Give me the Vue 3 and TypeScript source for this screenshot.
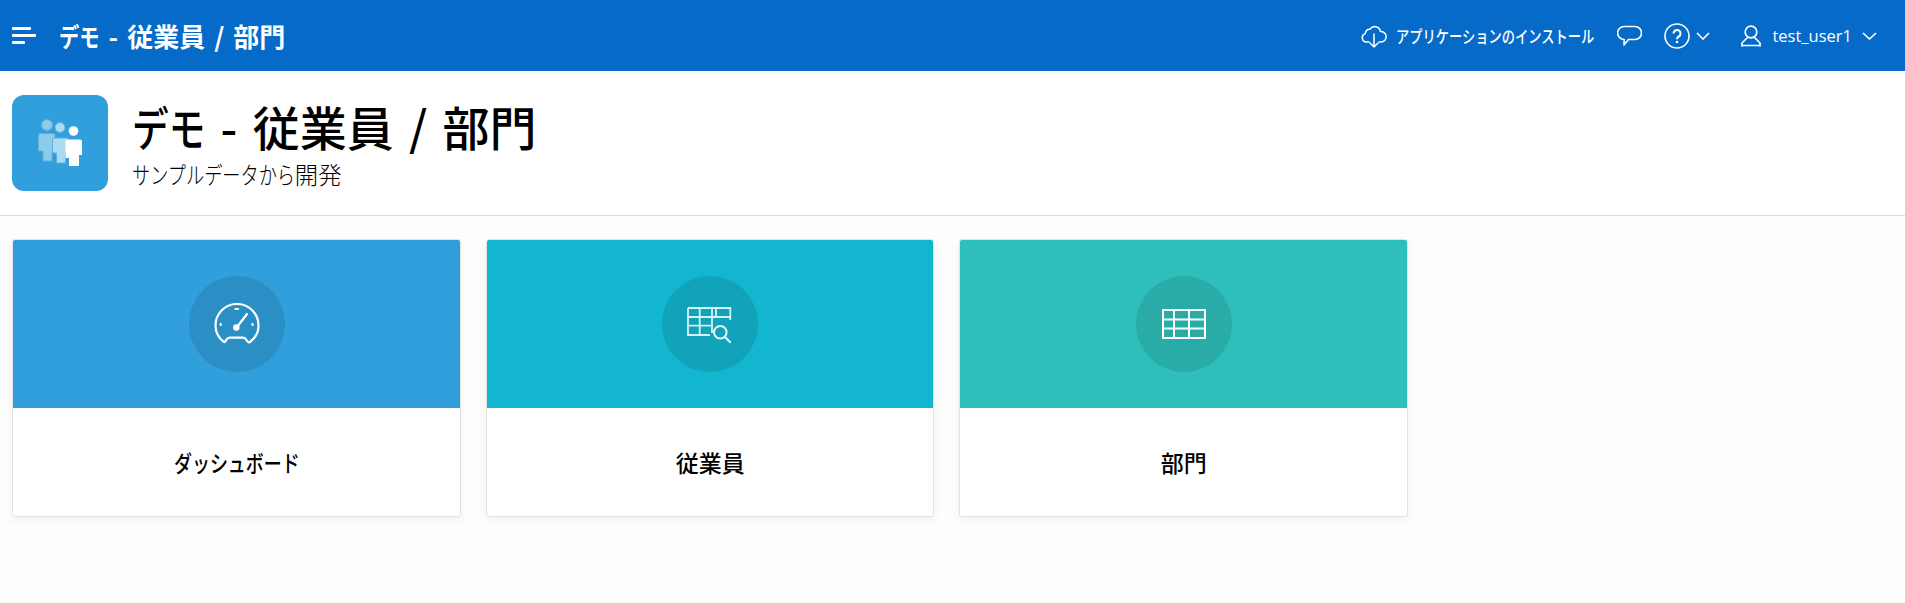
<script setup lang="ts">
interface Card { label: string; kana: boolean; color: string; icon: 'gauge' | 'search' | 'table' }
const cards: Card[] = [
  { label: 'ダッシュボード', kana: true, color: '#309fdb', icon: 'gauge' },
  { label: '従業員', kana: false, color: '#13b6cf', icon: 'search' },
  { label: '部門', kana: false, color: '#2ebfbc', icon: 'table' },
]
</script>

<template>
  <div class="page">
    <header class="topbar">
      <svg class="menu" width="25" height="17" viewBox="0 0 25 17" fill="#fff">
        <rect x="0" y="0" width="19" height="3" rx="1" />
        <rect x="0" y="7" width="24" height="3" rx="1" />
        <rect x="0" y="14" width="13" height="3" rx="1" />
      </svg>
      <div class="app-name"><span class="kana k2">デモ</span> - 従業員 / 部門</div>
      <nav class="actions">
        <svg class="ic-cloud" width="26" height="24" viewBox="0 0 26 24" fill="none" stroke="#fff" stroke-width="1.500" stroke-linecap="round" stroke-linejoin="round">
          <path d="M8 18H5.500a4.300 4.300 0 0 1-1.200-8.400 4.200 4.200 0 0 1 4.700-4.300A5.600 5.600 0 0 1 19.300 7.500a5 5 0 0 1 1.200 10.500H18" />
          <path d="M13 10v13M9 19l4 4 4-4" />
        </svg>
        <span class="install"><span class="kana k15">アプリケーションのインストール</span></span>
        <svg class="ic-chat" width="25" height="22" viewBox="0 0 25 22" fill="none" stroke="#fff" stroke-width="1.600" stroke-linejoin="round">
          <path d="M7 1.500h11a6 6 0 0 1 0 13H11.500L7 20l.2-5.500A6.500 6.500 0 0 1 7 1.500z" />
        </svg>
        <span class="help">
          <svg width="26" height="26" viewBox="0 0 26 26" fill="none" stroke="#fff" stroke-width="1.600">
            <circle cx="13" cy="13" r="12" />
            <path d="M9.500 10.500a3.500 3.500 0 1 1 5.300 3c-1.200.7-1.800 1.200-1.800 2.700" stroke-width="2.100" />
            <circle cx="13" cy="19" r="1.300" fill="#fff" stroke="none" />
          </svg>
          <svg class="chev" width="14" height="8" viewBox="0 0 14 8" fill="none" stroke="#fff" stroke-width="1.600"><path d="M1 1l6 6 6-6" /></svg>
        </span>
        <span class="user">
          <svg width="20" height="22" viewBox="0 0 20 22" fill="none" stroke="#fff" stroke-width="1.700" stroke-linejoin="round" stroke-linecap="round">
            <circle cx="10" cy="7" r="5.800" />
            <path d="M6.500 12.500L1 18v3M13.500 12.500L19 18v3M1 20.500h18" />
          </svg>
          <span class="username">test_user1</span>
          <svg class="chev" width="15" height="8" viewBox="0 0 15 8" fill="none" stroke="#fff" stroke-width="1.600"><path d="M1 1l6.500 6L14 1" /></svg>
        </span>
      </nav>
    </header>

    <section class="hero">
      <div class="hero-icon">
        <svg width="96" height="96" viewBox="0 0 96 96">
          <g fill="#8ccbe9" stroke="#62aedb" stroke-width="1">
            <circle cx="35" cy="30" r="5.500" />
            <path d="M28 38.500h13a2 2 0 0 1 2 2V56h-3v10H31V56h-4.500V40.500a2 2 0 0 1 1.500-2z" />
          </g>
          <g fill="#a9dcf2" stroke="#62aedb" stroke-width="1">
            <circle cx="48" cy="32.500" r="5" />
            <path d="M42 43h12.500a2 2 0 0 1 2 2v13h-3v10h-9V58h-4V45a2 2 0 0 1 2-2z" />
          </g>
          <g fill="#fff">
            <circle cx="61.500" cy="36" r="4.800" />
            <path d="M55.500 44.500h12.500a2 2 0 0 1 2 2V60h-3v11h-10V63h-3.500V46.500a2 2 0 0 1 2-2z" />
          </g>
        </svg>
      </div>
      <div class="hero-text">
        <h1><span class="kana k2">デモ</span> - 従業員 / 部門</h1>
        <p><span class="kana k9">サンプルデータから</span>開発</p>
      </div>
    </section>

    <main class="cards">
      <a v-for="card in cards" :key="card.label" class="card">
        <div class="card-top" :style="{ background: card.color }">
          <div class="circle">
            <svg v-if="card.icon === 'gauge'" width="46" height="42" viewBox="0 0 46 42" fill="none" stroke="#fff" stroke-width="2.200" stroke-linecap="round" stroke-linejoin="round">
              <path d="M10 39C4.500 35 1.500 28.500 1.500 22.500a21.500 21.500 0 0 1 43 0c0 6-3 12.500-8.500 16.500-1 .7-2 .3-2.800-.8l-1.500-2.200c-.8-1-1.700-1.400-3-1.400H16c-1.300 0-2.200.4-3 1.400l-1.700 2.400c-.4.600-.9.700-1.300.6z" />
              <path d="M23 24L33 11" />
              <circle cx="22.300" cy="24.500" r="3.200" fill="#fff" stroke="none" />
              <path d="M21.500 6h2.500M6.700 21v1M38.500 21v1" />
            </svg>
            <svg v-else-if="card.icon === 'search'" class="ic-search" width="46" height="38" viewBox="0 0 46 38" fill="none" stroke="#d6f3f8" stroke-width="1.800">
              <path d="M1 1h42.300v12M1 1v27h22M1 10h42.300M1 18.700h23M12.700 1v27M25 1v25M29 1v9" />
              <circle cx="33.300" cy="25.300" r="6.300" stroke="#e6f8fb" stroke-width="2" />
              <path d="M38 30l5 5" stroke="#e6f8fb" stroke-width="2.200" stroke-linecap="round" />
            </svg>
            <svg v-else width="44" height="30" viewBox="0 0 44 30" fill="none" stroke="#fff" stroke-width="2">
              <rect x="1" y="1" width="42" height="28" />
              <path d="M1 10.500h42M1 19.500h42M12 1v28M27 1v28" />
            </svg>
          </div>
        </div>
        <div class="card-label">
          <span v-if="card.kana" class="kana k7">{{ card.label }}</span>
          <span v-else>{{ card.label }}</span>
        </div>
      </a>
    </main>
  </div>
</template>

<style>
html, body { margin: 0; background: #fdfdfd; }
</style>

<style scoped>
.page {
  width: 1905px;
  height: 603px;
  overflow: hidden;
  background: #fdfdfd;
  font-family: "Noto Sans CJK JP", "Noto Sans", sans-serif;
}
.kana {
  display: inline-block;
  white-space: nowrap;
  transform: scaleX(.78);
  transform-origin: left center;
}
.k2 { margin-right: -.44em; }
.k7 { margin-right: -1.54em; }
.k9 { margin-right: -1.98em; }
.k15 { margin-right: -3.3em; }
.topbar {
  height: 71px;
  box-sizing: border-box;
  background: #056ac8;
  color: #fff;
  display: flex;
  align-items: center;
  padding: 0 28px 0 12px;
}
.menu { flex: none; margin-right: 22px; }
.app-name { font-size: 26px; font-weight: 700; white-space: pre; word-spacing: .12em; }
.actions { margin-left: auto; display: flex; align-items: center; }
.install { font-size: 17px; font-weight: 500; margin-left: 9px; line-height: 1; }
.ic-chat { margin-left: 23px; }
.help { display: flex; align-items: center; margin-left: 22px; }
.help .chev { margin-left: 6px; }
.user { display: flex; align-items: center; margin-left: 31px; }
.username { font-family: "Open Sans", sans-serif; font-size: 16.500px; margin: 0 10px 0 11px; }
.hero {
  height: 145px;
  box-sizing: border-box;
  background: #fff;
  border-bottom: 1px solid #dcdcdc;
  display: flex;
  align-items: center;
  padding: 0 0 0 12px;
}
.hero-icon {
  width: 96px;
  height: 96px;
  border-radius: 12px;
  background: #309fdb;
  flex: none;
}
.hero-icon svg { display: block; }
.hero-text { margin-left: 24px; color: #000; }
h1 { margin: 0 0 6px; font-size: 47px; line-height: 56px; font-weight: 500; white-space: pre; word-spacing: .1em; }
p { margin: 0; font-size: 23.300px; line-height: 28px; font-weight: 300; }
.cards {
  display: flex;
  gap: 25px;
  padding: 23px 0 0 12.300px;
}
.card {
  width: 448.600px;
  height: 278px;
  box-sizing: border-box;
  background: #fff;
  border: 1px solid #e3e3e3;
  border-radius: 3px;
  box-shadow: 0 3px 8px rgba(0, 0, 0, .05);
  overflow: hidden;
  display: flex;
  flex-direction: column;
}
.card-top {
  height: 168px;
  flex: none;
  display: flex;
  align-items: center;
  justify-content: center;
}
.circle {
  width: 96px;
  height: 96px;
  border-radius: 50%;
  background: rgba(0, 0, 0, .1);
  display: flex;
  align-items: center;
  justify-content: center;
}
.ic-search { margin-top: 4px; }
.card-label {
  flex: 1;
  display: flex;
  align-items: center;
  justify-content: center;
  font-size: 23px;
  font-weight: 500;
  color: #000;
}
</style>
